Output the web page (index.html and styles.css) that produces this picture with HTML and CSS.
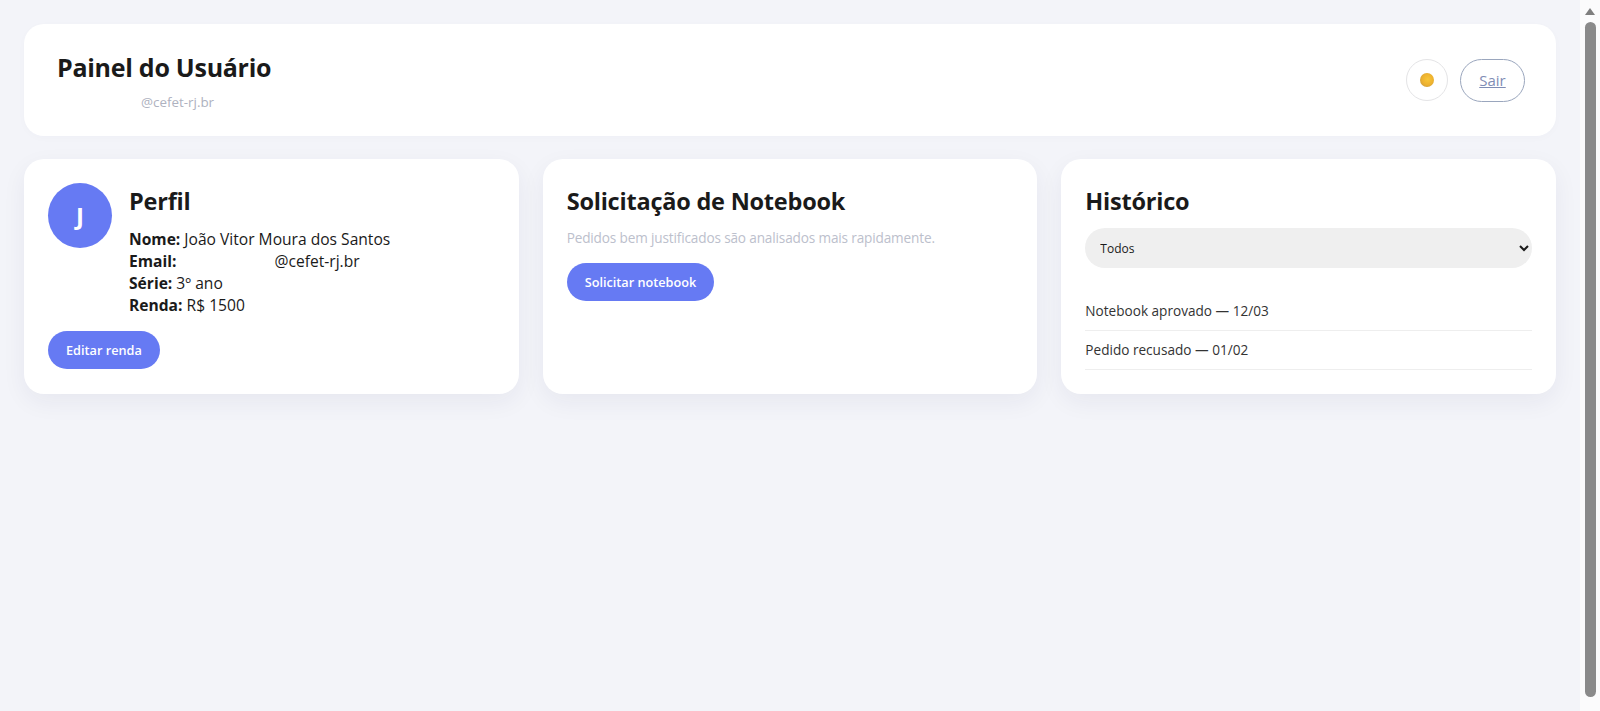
FILE: index.html
```html
<!DOCTYPE html>
<html lang="pt-BR">
<head>
    <meta charset="UTF-8">
    <meta name="viewport" content="width=device-width, initial-scale=1.0">
    <title>Painel do Usuário</title>
    <link rel="stylesheet" href="styles.css">
</head>
<body>
    <div class="page">
        <main class="dashboard">
            <header class="topbar">
                <div>
                    <h1>Painel do Usuário</h1>
                    <p class="user-mail"><span class="hidden-mail"></span>@cefet-rj.br</p>
                </div>
                <div class="topbar-actions">
                    <button class="theme-btn" aria-label="Trocar tema"><span class="theme-dot"></span></button>
                    <a class="logout" href="#">Sair</a>
                </div>
            </header>

            <section class="cards">
                <article class="card">
                    <div class="profile">
                        <div class="avatar">J</div>
                        <div>
                            <h2>Perfil</h2>
                            <p class="profile-info">
                                <b>Nome:</b> João Vitor Moura dos Santos<br>
                                <b>Email:</b> <span class="hidden-mail-long"></span>@cefet-rj.br<br>
                                <b>Série:</b> 3º ano<br>
                                <b>Renda:</b> R$ 1500
                            </p>
                        </div>
                    </div>
                    <button class="btn">Editar renda</button>
                </article>

                <article class="card">
                    <h2>Solicitação de Notebook</h2>
                    <p class="hint">Pedidos bem justificados são analisados mais rapidamente.</p>
                    <button class="btn">Solicitar notebook</button>
                </article>

                <article class="card">
                    <h2>Histórico</h2>
                    <select class="filter">
                        <option>Todos</option>
                    </select>
                    <ul class="history">
                        <li>Notebook aprovado — 12/03</li>
                        <li>Pedido recusado — 01/02</li>
                    </ul>
                </article>
            </section>
        </main>

        <div class="scrollbar">
            <span class="scroll-arrow"></span>
            <span class="scroll-thumb"></span>
        </div>
    </div>
</body>
</html>
```

FILE: styles.css
```css
* {
    box-sizing: border-box;
}

body {
    margin: 0;
    font-family: 'Open Sans', 'Noto Sans', sans-serif;
    background: #f3f4f9;
    color: #1a1a1a;
    overflow: hidden;
}

.page {
    display: flex;
    height: 711px;
}

.dashboard {
    flex: 1;
    min-width: 0;
    padding: 24px;
}

.topbar {
    display: flex;
    justify-content: space-between;
    align-items: center;
    height: 112px;
    padding: 0 31px 0 33px;
    margin-bottom: 23px;
    background: #fff;
    border-radius: 20px;
    box-shadow: 0 2px 8px rgba(30, 40, 80, 0.02);
}

h1 {
    margin: 0 0 8px;
    font-size: 25px;
    font-weight: 700;
    letter-spacing: -0.27px;
    line-height: 36px;
}

.user-mail {
    margin: 0;
    font-size: 13.4px;
    line-height: 18px;
    color: #aeb2c0;
}

.hidden-mail {
    display: inline-block;
    width: 84px;
}

.topbar-actions {
    display: flex;
    align-items: center;
    gap: 12px;
}

.theme-btn {
    display: flex;
    align-items: center;
    justify-content: center;
    width: 42px;
    height: 42px;
    padding: 0;
    background: #fff;
    border: 1px solid #e4e4e6;
    border-radius: 50%;
}

.theme-dot {
    width: 14px;
    height: 14px;
    border-radius: 50%;
    background: radial-gradient(circle at 55% 45%, #f8c638 0%, #eeb22f 50%, #b8924a 100%);
}

.logout {
    display: flex;
    align-items: center;
    justify-content: center;
    width: 65px;
    height: 43px;
    border: 1px solid #9aa6bd;
    border-radius: 22px;
    font-size: 15px;
    color: #7f8db5;
}

.cards {
    display: grid;
    grid-template-columns: repeat(3, 1fr);
    gap: 24px;
}

.card {
    height: 235px;
    padding: 24px;
    background: #fff;
    border-radius: 20px;
    box-shadow: 0 8px 24px rgba(30, 40, 80, 0.06);
}

h2 {
    margin: 0;
    font-size: 23.5px;
    font-weight: 700;
    letter-spacing: -0.22px;
    line-height: 36px;
}

.profile {
    display: flex;
    gap: 17px;
}

.avatar {
    display: flex;
    align-items: center;
    justify-content: center;
    flex-shrink: 0;
    width: 64px;
    height: 65px;
    border-radius: 50%;
    background: #667af3;
    color: #fff;
    font-size: 24px;
    font-weight: 700;
}

.profile-info {
    margin: 9px 0 15px;
    font-size: 15.6px;
    line-height: 22px;
}

.profile-info b {
    font-weight: 700;
}

.hidden-mail-long {
    display: inline-block;
    width: 94px;
}

.btn {
    display: block;
    height: 38px;
    padding: 0 18px;
    border: none;
    border-radius: 19px;
    background: #667af3;
    color: #fff;
    font-family: inherit;
    font-size: 12.7px;
    font-weight: 600;
}

.hint {
    margin: 9px 0 15px;
    font-size: 13.6px;
    letter-spacing: -0.15px;
    line-height: 20px;
    color: #bcc0cc;
}

.filter {
    display: block;
    width: 100%;
    height: 40px;
    margin-top: 9px;
    padding: 0 11px;
    border: none;
    border-radius: 20px;
    background-color: #efefef;
    color: #1a1a1a;
    font-family: inherit;
    font-size: 12px;
}

.history {
    list-style: none;
    margin: 24px 0 0;
    padding: 0;
    font-size: 13.6px;
    color: #333;
}

.history li {
    height: 39px;
    line-height: 38px;
    border-bottom: 1px solid #eee;
}

.scrollbar {
    display: flex;
    flex-direction: column;
    align-items: center;
    width: 20px;
    height: 100%;
    padding-top: 8px;
    background: #fbfbfc;
}

.scroll-arrow {
    width: 0;
    height: 0;
    margin-bottom: 7px;
    border-left: 5px solid transparent;
    border-right: 5px solid transparent;
    border-bottom: 7px solid #7f7f7f;
}

.scroll-thumb {
    width: 11px;
    height: 675px;
    border-radius: 6px;
    background: #8a8a8a;
}
```
